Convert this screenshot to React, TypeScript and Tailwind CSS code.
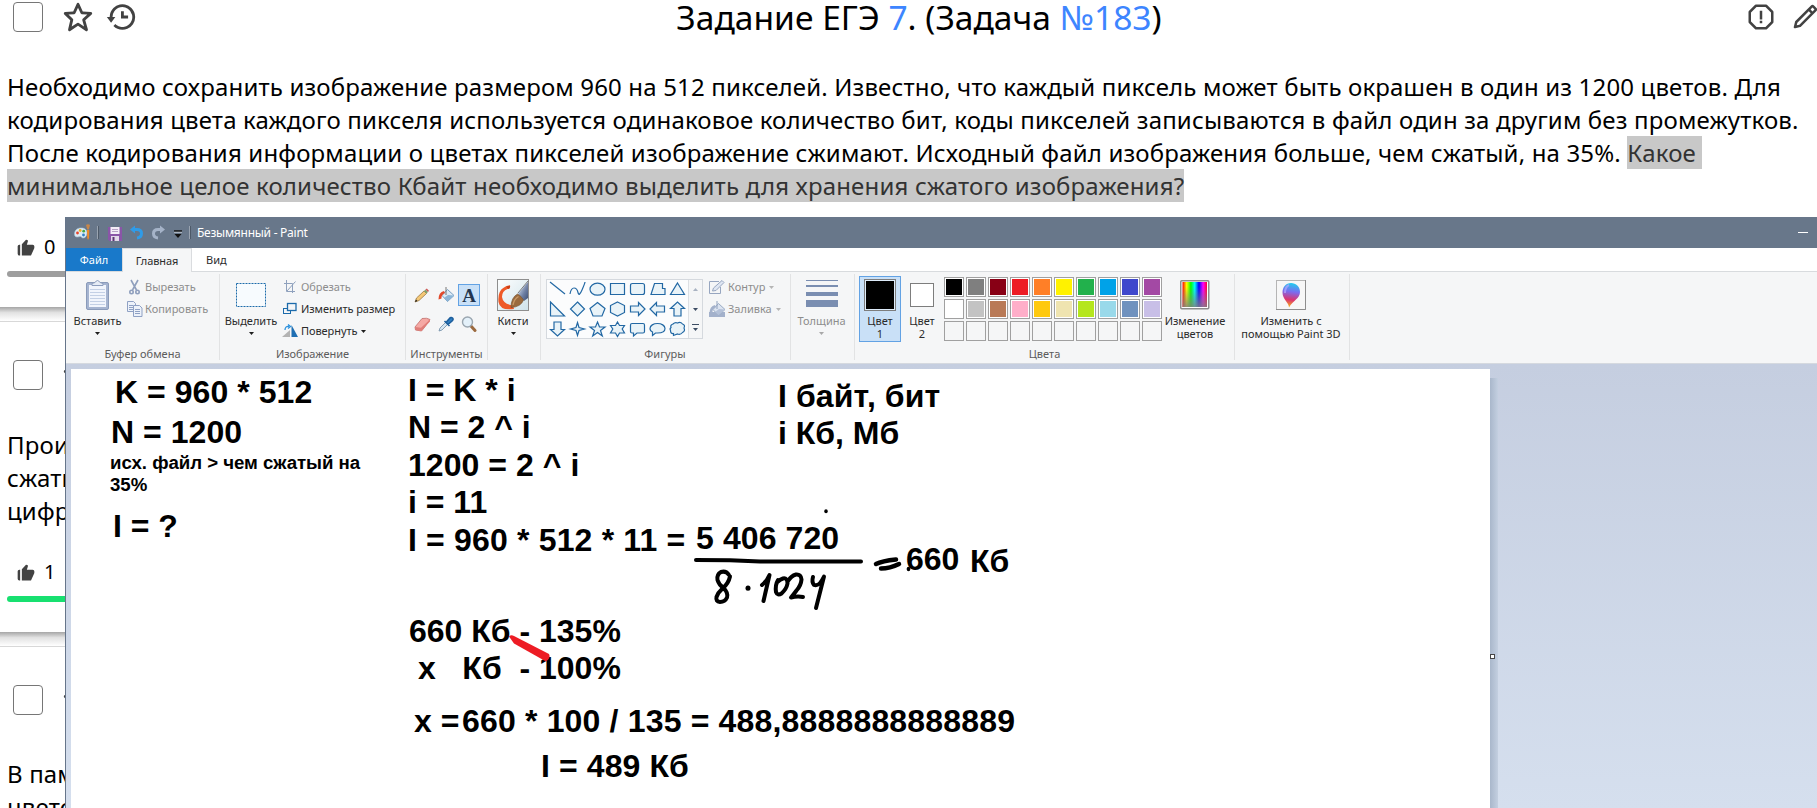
import React from "react";
import { BiStar, BiHistory, BiErrorAlt, BiPencil, BiSolidLike } from "react-icons/bi";

/* ---------- Task cards ---------- */

function CardHeader({ children }: { children?: React.ReactNode }) {
  return (
    <div className="flex h-[34px] items-start">
      <div className="ml-[13px] h-[30px] w-[30px] shrink-0 rounded-[4px] border border-[#767676] bg-white" />
      <BiStar className="-mt-[2px] ml-[18px] h-[34px] w-[34px] shrink-0 text-[#424242]" />
      <BiHistory className="-mt-[2px] ml-[9px] h-[34px] w-[34px] shrink-0 text-[#424242]" />
      {children}
    </div>
  );
}

function CardFooter({ likes, bar }: { likes: string; bar: string }) {
  return (
    <>
      <div className="mt-[32px] flex h-[26px] items-center pl-[16px]">
        <BiSolidLike className="mt-[1px] h-[20px] w-[20px] text-[#424242]" />
        <span className="ml-[8px] text-[20px] leading-[26px]">{likes}</span>
      </div>
      <div className={`mx-[7px] mt-[11px] h-[6px] rounded-full ${bar}`} />
      <div className="h-[30px]" />
    </>
  );
}

function Gap() {
  return <div className="h-[15px] border-b border-[#d8d8d8] bg-gradient-to-b from-[#a6a6a6] via-[#e2e2e2] via-40% to-white" />;
}

/* ---------- Ribbon pieces ---------- */

function Group({ label, width, children }: { label?: string; width: string; children: React.ReactNode }) {
  return (
    <div className={`flex h-[91px] shrink-0 flex-col ${width}`}>
      <div className="flex h-[75px]">{children}</div>
      <div className="text-center leading-[14px] text-[#5c5c5c]">{label}</div>
    </div>
  );
}

function Sep() {
  return <div className="mt-[2px] h-[86px] w-px shrink-0 bg-[#e2e3e4]" />;
}

function Arrow({ c = "#1e1e1e" }: { c?: string }) {
  return (
    <svg width="5" height="3" viewBox="0 0 5 3" className="shrink-0">
      <path d="M0 0h5L2.500 3z" fill={c} />
    </svg>
  );
}

function Big({ icon, label, width, gray, arrow = true }: { icon: React.ReactNode; label: React.ReactNode; width: string; gray?: boolean; arrow?: boolean }) {
  return (
    <div className={`flex shrink-0 flex-col items-center ${width} ${gray ? "text-[#8d8d8d]" : "text-[#2b2b2b]"}`}>
      <div className="flex h-[42px] items-center pt-[4px]">{icon}</div>
      <div className="text-center leading-[13px] whitespace-nowrap">{label}</div>
      {arrow && (
        <div className="mt-[5px] flex">
          <Arrow c={gray ? "#a8a8a8" : "#1e1e1e"} />
        </div>
      )}
    </div>
  );
}

function Row({ icon, label, gray, arrow }: { icon: React.ReactNode; label: string; gray?: boolean; arrow?: boolean }) {
  return (
    <div className={`flex h-[22px] items-center leading-[22px] ${gray ? "text-[#8d8d8d]" : "text-[#2b2b2b]"}`}>
      <span className="flex w-[18px] shrink-0">{icon}</span>
      <span className="whitespace-nowrap">{label}</span>
      {arrow && (
        <span className="ml-[4px] flex">
          <Arrow c={gray ? "#b5b5b5" : "#1e1e1e"} />
        </span>
      )}
    </div>
  );
}

/* ---------- Icons ---------- */

const Clipboard = () => (
  <svg width="26" height="32" viewBox="0 0 26 32">
    <rect x="1.5" y="3.5" width="22" height="27" rx="1.5" fill="#a5b4d0" stroke="#8a9bba" />
    <rect x="4" y="6" width="17" height="22" fill="#f1f5fc" />
    <path d="M5 10.500h15M5 13.500h15M5 16.500h15M5 19.500h15M5 22.500h15M5 25.500h15" stroke="#c3d0e5" />
    <path d="M7 6.500V4.500l3-1q2.500-4 5 0l3 1v2z" fill="#e6ecf5" stroke="#8c9dbd" />
  </svg>
);

const Scissors = () => (
  <svg width="16" height="16" viewBox="0 0 16 16" fill="none" stroke="#8f9fbd" strokeWidth="1.600">
    <path d="M4 1l5.500 10M11 1L5.500 11" />
    <circle cx="4.500" cy="13" r="1.700" />
    <circle cx="10.500" cy="13" r="1.700" />
  </svg>
);

const Copy = () => (
  <svg width="16" height="16" viewBox="0 0 16 16" fill="#edf2fa" stroke="#8fa1c4">
    <path d="M.5.5h6l2 2v8h-8z" />
    <path d="M2 4.500h4M2 6.500h4M2 8.500h4" />
    <path d="M6.500 4.500h6l2.500 2.500v8.500h-8.500z" />
    <path d="M8 8.500h5M8 10.500h5M8 12.500h5" />
  </svg>
);

const Crop = () => (
  <svg width="14" height="14" viewBox="0 0 14 14" fill="none" stroke="#8fa1bd">
    <path d="M3.500 0v11.500H12M1 3.500h8.500V13M4 11l8.500-9.500" />
  </svg>
);

const Resize = () => (
  <svg width="15" height="14" viewBox="0 0 15 14" fill="#f5f6f7" stroke="#1c6bab">
    <rect x=".5" y="6.500" width="7" height="5" />
    <rect x="4.500" y="1.500" width="8.500" height="7" strokeWidth="1.300" />
  </svg>
);

const Rotate = () => (
  <svg width="16" height="14" viewBox="0 0 16 14" className="-ml-[1px]">
    <path d="M0 13h8V6z" fill="#b3b3b3" />
    <path d="M9.500 1v12H16z" fill="#1f6fb3" />
    <path d="M3 6q0-4 4-3.500M6 .5l2.500 2L6 4.500" fill="none" stroke="#2a90dd" strokeWidth="1.300" />
  </svg>
);

const Pencil = () => (
  <svg width="16" height="16" viewBox="0 0 16 16">
    <path d="M1 15l1.500-4L10 4l2.500 2.500L5 13.500z" fill="#f4c877" stroke="#8e6a34" strokeWidth=".7" />
    <path d="M1 15l1-2.500 1.500 1.500z" fill="#222" />
    <path d="M10 4l1.500-1.500L14 5l-1.500 1.500z" fill="#7fa36e" />
    <path d="M11.500 2.500l1.300-1 2.200 2.200L14 5z" fill="#d05a5a" />
  </svg>
);

const Bucket = ({ gray = false }: { gray?: boolean }) => (
  <svg width="17" height="16" viewBox="0 0 17 16">
    {gray && <rect x="0" y="11" width="16" height="5" fill="#a3b1cb" />}
    <path d="M9.500 2.500L16 8.500 9.500 14.500 4 8.500z" fill={gray ? "#dbe3f0" : "#dcebf7"} stroke={gray ? "#8fa1bd" : "#6b94ba"} strokeWidth=".9" />
    <path d="M10 8L16 8.500 9.500 14.500 6 11z" fill={gray ? "#b4c1d8" : "#8db6d8"} />
    <path d="M8 0v8" stroke={gray ? "#8fa1bd" : "#777"} />
    <path d="M6 4Q.5 5 .5 12.500l3-1Q3 8 7 6z" fill={gray ? "#a3b1cb" : "#e2492b"} />
  </svg>
);

const Eraser = () => (
  <svg width="17" height="15" viewBox="0 0 17 15">
    <path d="M1 10L8 1.500q5-1 8 1L10 11 7.500 14 1.500 13z" fill="#f5a9a5" stroke="#c0706c" strokeWidth=".8" />
    <path d="M1 10l6 .8L16 2.500v2L10 11l-2.500 3-6-1z" fill="#e07e79" />
  </svg>
);

const Picker = () => (
  <svg width="16" height="16" viewBox="0 0 16 16">
    <path d="M1 15l1-3 6-6 2 2-6 6z" fill="#d6e6f2" stroke="#6d8ba6" strokeWidth=".8" />
    <path d="M6.500 5l5 5M8 6.500l3-3.500q2-2.500 3.500-1t-1 3.500l-3.500 3z" stroke="#1d5e9c" strokeWidth="1.600" fill="#2f7ec2" />
  </svg>
);

const Magnifier = () => (
  <svg width="16" height="16" viewBox="0 0 16 16">
    <path d="M9.500 9.500L14 14.500" stroke="#9b6a40" strokeWidth="3" strokeLinecap="round" />
    <circle cx="6.500" cy="6" r="5" fill="#e4f1fa" stroke="#9aa6b0" strokeWidth="1.400" />
  </svg>
);

const Brush = () => (
  <svg width="32" height="32" viewBox="0 0 32 32">
    <defs>
      <linearGradient id="brushBg" x1="0" y1="0" x2="1" y2="1">
        <stop offset="0" stopColor="#fdfefe" />
        <stop offset="1" stopColor="#cfe3ea" />
      </linearGradient>
      <linearGradient id="ferrule" x1="0" y1="0" x2="1" y2="1">
        <stop offset=".1" stopColor="#d5deec" />
        <stop offset=".6" stopColor="#6d7fa3" />
        <stop offset="1" stopColor="#3f4f73" />
      </linearGradient>
    </defs>
    <rect x=".5" y=".5" width="31" height="31" fill="url(#brushBg)" stroke="#8e8e8e" />
    <path d="M13 6.500q.5 4-2.500 3.500Q5 12 5 18q1 7 11 8.500l1 3.500Q3 32 1.500 23 .5 12 7 8.500 10 6 13 6.500z" fill="#ee5a28" />
    <path d="M13 6.500q.5 4-2.500 3l-1-2z" fill="#c93f16" />
    <path d="M21 15L31 3v16l-4 3z" fill="url(#ferrule)" />
    <path d="M21 14L31 2" stroke="#5a5a5a" strokeWidth=".8" />
    <path d="M14 28.500q0-10 6.500-13.500 3.500 1.500 6 6-2.500 7-12.500 7.500z" fill="#9a6b3e" stroke="#6f4a27" strokeWidth=".6" />
    <path d="M16 26q1-6 5.500-8.500" stroke="#c89a66" strokeWidth="1.300" fill="none" />
  </svg>
);

const SHAPES = [
  "M3 3l15 12",
  "M3 15Q4 9 7 9t4 4.500 4-2.500 3-8",
  "M10.500 4.200a7.500 6 0 100 12 7.500 6 0 100-12z",
  "M3.500 4.500h14v11h-14z",
  "M5.500 4.500h10q2 0 2 2v7q0 2-2 2h-10q-2 0-2-2v-7q0-2 2-2z",
  "M7.500 4.500h8v5h2.500v6H4z",
  "M10.500 4l7 11.500h-14z",
  "M3.500 3v14h14z",
  "M10.500 3l7 7-7 7-7-7z",
  "M10.500 3.500l7.500 6-3 7.500H6l-3-7.500z",
  "M10.500 3l7 3.500v7l-7 3.500-7-3.500v-7z",
  "M3.500 7h8V3.500l6.500 6.500-6.500 6.500V13h-8z",
  "M17.500 7h-8V3.500L3 10l6.500 6.500V13h8z",
  "M7 17v-7.500H3.500L10.500 3l7 6.500H14V17z",
  "M7 3v7.500H3.500l7 6.500 7-6.500H14V3z",
  "M10.500 3.500l1.500 5 5.500 1.500-5.500 1.500-1.500 5-1.500-5-5.500-1.500 5.500-1.500z",
  "M10.500 3l2 5h5.500l-4.500 3.500 1.800 5.500-4.800-3.500-4.800 3.500 1.800-5.500L3 8h5.500z",
  "M10.500 3l2 3.500h5l-2.300 3.500 2.300 4h-5l-2 3.500-2-3.500h-5l2.300-4-2.300-3.500h5z",
  "M5 4.500h11q1.500 0 1.500 1.500v6.500q0 1.500-1.500 1.500h-6l-3.500 3v-3H5q-1.500 0-1.500-1.500V6q0-1.500 1.500-1.500z",
  "M10.500 4.500c4 0 7.500 2 7.500 5s-3 4.500-7.500 4.500q-1 0-2 0l-3 2.500V13Q3 12 3 9.500c0-3 3.500-5 7.500-5z",
  "M6 5q2-2 4.500-1 3-1.500 5 1 3 1 1.500 4 1.500 3-1.500 4.500-2 2.500-5 1.500l-4 1.500v-2q-3 .5-3-3-1-2 .5-3Q3 6 6 5z",
];

const Outline = () => (
  <svg width="16" height="14" viewBox="0 0 16 14" fill="none" stroke="#97a6c0">
    <path d="M10 1.500H.5v12h11V7" />
    <path d="M3.500 11l1-3L13 .5l2 2-8 8z" fill="#dfe6f2" />
  </svg>
);

const Rainbow = () => (
  <svg width="30" height="30" viewBox="0 0 30 30">
    <defs>
      <linearGradient id="hue">
        <stop offset="0" stopColor="#f00" />
        <stop offset=".17" stopColor="#ff0" />
        <stop offset=".34" stopColor="#0f0" />
        <stop offset=".5" stopColor="#0ff" />
        <stop offset=".67" stopColor="#00f" />
        <stop offset=".84" stopColor="#f0f" />
        <stop offset="1" stopColor="#f03" />
      </linearGradient>
      <linearGradient id="dull" x1="0" y1="0" x2="0" y2="1">
        <stop offset=".2" stopColor="#808080" stopOpacity="0" />
        <stop offset="1" stopColor="#808080" stopOpacity=".85" />
      </linearGradient>
    </defs>
    <rect x=".75" y=".75" width="28" height="28" rx="1" fill="#fff" stroke="#8c8c8c" strokeWidth="1.500" />
    <rect x="2.500" y="2" width="24.500" height="25" fill="url(#hue)" />
    <rect x="2.500" y="2" width="24.500" height="25" fill="url(#dull)" />
  </svg>
);

const Paint3D = () => (
  <svg width="30" height="30" viewBox="0 0 30 30">
    <defs>
      <linearGradient id="drop" x1=".5" y1="0" x2=".4" y2="1">
        <stop offset="0" stopColor="#20cdee" />
        <stop offset=".35" stopColor="#7a6cf0" />
        <stop offset=".68" stopColor="#dc3470" />
        <stop offset="1" stopColor="#f9b916" />
      </linearGradient>
    </defs>
    <rect x=".5" y=".5" width="29" height="29" fill="#f7f7f7" stroke="#b5b5b5" />
    <path d="M0 29.500h29.500V0" fill="none" stroke="#8e8e8e" />
    <path d="M15 3c5 0 9 3.500 9 9 0 6.500-7 8.500-11 15.500 0-5-6.500-8-6.500-15C6.500 7 10 3 15 3z" fill="url(#drop)" />
    <path d="M9 13q0-6 4-8" fill="none" stroke="#b8a6ff" strokeWidth="2" opacity=".7" />
  </svg>
);

const Palette = () => (
  <svg width="17" height="17" viewBox="0 0 17 17">
    <path d="M7 4c4 0 6 2 6 5s-2 5-4 5-1-2-3-1.500S.5 14 .5 10 3.500 4 7 4z" fill="#dcebf5" stroke="#a7c4d8" strokeWidth=".6" />
    <circle cx="3.500" cy="9" r="1.400" fill="#e8452c" />
    <circle cx="6.200" cy="6.500" r="1.400" fill="#f0b323" />
    <circle cx="9.700" cy="7.200" r="1.400" fill="#46a746" />
    <circle cx="9.500" cy="11" r="1.400" fill="#2f80c8" />
    <path d="M12 1q2-1.500 4 0l-1.200 4.500h-1.500z" fill="#c78649" />
    <path d="M13 6h2.300l-.3 8-1 2-.8-2z" fill="#ee8a2a" />
  </svg>
);

const Floppy = () => (
  <svg width="14" height="14" viewBox="0 0 14 14">
    <path d="M0 0h14v14H1.500L0 12.500z" fill="#8a55a8" />
    <rect x="2.500" y="0" width="9" height="7" fill="#f3eef7" />
    <path d="M4 2.500h6M4 4.500h6" stroke="#b7a1c7" />
    <rect x="3" y="9" width="8" height="5" fill="#e3d9ea" />
    <rect x="4.500" y="10" width="2" height="4" fill="#5b3573" />
  </svg>
);

const Undo = ({ c }: { c: string }) => (
  <svg width="14" height="15" viewBox="0 0 14 15" fill="none" stroke={c} strokeWidth="3">
    <path d="M2.500 4.500H7q4.500 0 4.500 4T7 13" />
    <path d="M0 4.500L5 .5v8z" fill={c} stroke="none" />
  </svg>
);

/* ---------- Palette colours ---------- */

const COLORS = [
  "bg-[#000000]", "bg-[#7f7f7f]", "bg-[#880015]", "bg-[#ed1c24]", "bg-[#ff7f27]",
  "bg-[#fff200]", "bg-[#22b14c]", "bg-[#00a2e8]", "bg-[#3f48cc]", "bg-[#a349a4]",
  "bg-[#ffffff]", "bg-[#c3c3c3]", "bg-[#b97a57]", "bg-[#ffaec9]", "bg-[#ffc90e]",
  "bg-[#efe4b0]", "bg-[#b5e61d]", "bg-[#99d9ea]", "bg-[#7092be]", "bg-[#c8bfe7]",
];

/* ---------- Notes typed on the canvas ---------- */

function Note({ at, children }: { at: string; children: React.ReactNode }) {
  return (
    <div className={`absolute font-['Liberation_Sans',Arial,sans-serif] text-[32px] leading-[37px] font-bold whitespace-pre text-black ${at}`}>
      {children}
    </div>
  );
}

function Canvas() {
  return (
    <div className="relative h-[439px] w-[1419px] shrink-0 bg-white">
      <Note at="left-[44px] top-[5px] tracking-[0.05px]">K = 960 * 512</Note>
      <Note at="left-[40px] top-[45px] tracking-[0.05px]">N = 1200</Note>
      <div className="absolute top-[83px] left-[39px] font-['Liberation_Sans',Arial,sans-serif] text-[18.67px] leading-[22px] font-bold tracking-[-0.04px] whitespace-pre">
        {"исх. файл > чем сжатый на\n35%"}
      </div>
      <Note at="left-[42px] top-[139px]">I = ?</Note>
      <Note at="left-[337px] top-[3px]">I = K * i</Note>
      <Note at="left-[337px] top-[40px]">N = 2 ^ i</Note>
      <Note at="left-[337px] top-[78px] tracking-[0.05px]">1200 = 2 ^ i</Note>
      <Note at="left-[337px] top-[115px]">i = 11</Note>
      <Note at="left-[337px] top-[153px] tracking-[0.17px]">I = 960 * 512 * 11 =</Note>
      <Note at="left-[625px] top-[151px] tracking-[0.1px]">5 406 720</Note>
      <Note at="left-[835px] top-[172px]">660</Note>
      <Note at="left-[899px] top-[174px]">Кб</Note>
      <Note at="left-[707px] top-[9px] tracking-[0.1px]">I байт, бит</Note>
      <Note at="left-[707px] top-[46px]">i Кб, Мб</Note>
      <Note at="left-[338px] top-[244px]">660 Кб - 135%</Note>
      <Note at="left-[338px] top-[281px]">{" x   Кб  - 100%"}</Note>
      <Note at="left-[343px] top-[334px]">x =</Note>
      <Note at="left-[391px] top-[334px] tracking-[0.17px]">660 * 100 / 135 = 488,8888888888889</Note>
      <Note at="left-[470px] top-[379px] tracking-[0.1px]">I = 489 Кб</Note>
      <svg className="absolute top-0 left-0" width="1419" height="439" viewBox="71 369 1419 439" fill="none" strokeLinecap="round" strokeLinejoin="round">
        <path d="M509 636.500q2-2 5-.5l35 18q2 4-3 7.500l-32-18z" fill="#ed1c24" />
        <g stroke="#000" strokeWidth="4">
          <path d="M696 560l34 .2 30 1.300H861" />
          <path d="M729 575q-3-4.500-8-3-4.500 2.500-3.500 8 1.500 5 6 8 5 5 3.500 9.500-2 4.500-7 4.500-4.500-.5-3.500-5 1.500-4.500 6-8.500 6-5 7.500-12" />
          <path d="M748 588v.3" strokeWidth="5" />
          <path d="M762 585q5-4 7.500-10l-6 26" />
          <path d="M778 580q-3 5-2 12 1.500 4 5.500 1.500 5-4.500 6-10 0-6-4.500-5-3 1-5 3" />
          <path d="M788 581q3-5 8-6.500 5-.5 5.500 5-.5 6-5 11-3 4-5.500 7 6-1.500 12-.5" />
          <path d="M813 577q-1.500 5 1 8 5 2 10-8.500l-8 31.500" />
          <path d="M876 564q6-3 20-4.500" strokeWidth="4.500" />
          <path d="M881 568.500q9 0 18-4.500" strokeWidth="4.500" />
          <path d="M826 511v.4" strokeWidth="3.500" />
          <path d="M908.500 568.500v1" strokeWidth="3.500" />
        </g>
      </svg>
    </div>
  );
}

/* ---------- Paint window ---------- */

function PaintWindow() {
  return (
    <div className="absolute top-[217px] left-[65px] h-[591px] w-[1752px] overflow-hidden border-l border-[#66758a] bg-white font-['Noto_Sans','Open_Sans',sans-serif] text-[11px]">
      <div className="flex h-[31px] items-center bg-[#68778a] pl-[8px] text-white">
        <Palette />
        <div className="ml-[6px] h-[13px] w-[2px] border-l border-[#99a3b0] bg-[#4d5968]" />
        <div className="ml-[9px] flex pt-[2px]"><Floppy /></div>
        <div className="ml-[8px] flex"><Undo c="#2f9be8" /></div>
        <div className="ml-[7px] flex -scale-x-100"><Undo c="#a5b3c8" /></div>
        <svg width="8" height="8" viewBox="0 0 8 8" className="mt-[2px] ml-[9px]">
          <path d="M0 1h8" stroke="#111" strokeWidth="1.500" />
          <path d="M0 2.300h8" stroke="#cfd6de" strokeWidth=".8" />
          <path d="M.5 4h7L4 8z" fill="#111" />
        </svg>
        <div className="ml-[7px] h-[13px] w-[2px] border-l border-[#99a3b0] bg-[#4d5968]" />
        <span className="ml-[6px] text-[12px] leading-[14px] tracking-[-0.26px] whitespace-nowrap">Безымянный - Paint</span>
        <div className="mr-[9px] ml-auto h-px w-[10px] bg-white" />
      </div>

      <div className="flex h-[24px] border-b border-[#d8dbde] text-[#2b2b2b]">
        <div className="flex w-[56px] items-center justify-center bg-[#1979ca] text-white">Файл</div>
        <div className="-mb-px flex w-[70px] items-center justify-center border border-b-0 border-[#dadcdf] bg-[#f5f6f7] pb-px tracking-[-0.1px]">Главная</div>
        <div className="ml-[14px] flex items-center">Вид</div>
      </div>

      <div className="flex h-[92px] border-b border-[#d5d9df] bg-[#f5f6f7]">
        <Group label="Буфер обмена" width="w-[153px]">
          <Big width="ml-[5px] w-[53px]" icon={<Clipboard />} label="Вставить" />
          <div className="mt-[4px] ml-[3px]">
            <Row gray icon={<Scissors />} label="Вырезать" />
            <Row gray icon={<Copy />} label="Копировать" />
          </div>
        </Group>
        <Sep />
        <Group label="Изображение" width="w-[185px]">
          <Big
            width="ml-[4px] w-[54px]"
            icon={
              <svg width="30" height="24">
                <rect x=".5" y=".5" width="29" height="23" fill="#f7fbfe" stroke="#1c6bab" strokeDasharray="2 1" />
              </svg>
            }
            label="Выделить"
          />
          <div className="mt-[4px] ml-[5px] tracking-[-0.06px]">
            <Row gray icon={<Crop />} label="Обрезать" />
            <Row icon={<Resize />} label="Изменить размер" />
            <Row arrow icon={<Rotate />} label="Повернуть" />
          </div>
        </Group>
        <Sep />
        <Group label="Инструменты" width="w-[81px]">
          <div className="mt-[12px] ml-[4px] grid h-[51px] grid-cols-[24px_22px_22px] grid-rows-[22px_22px] gap-x-[1px] gap-y-[7px]">
            <div className="flex items-center justify-center"><Pencil /></div>
            <div className="flex items-center justify-center"><Bucket /></div>
            <div className="flex items-center justify-center border border-[#62a2e4] bg-[#c9e0f7] font-['Liberation_Serif',serif] text-[19px] leading-none font-bold text-[#22354f]">A</div>
            <div className="flex items-center justify-center"><Eraser /></div>
            <div className="flex items-center justify-center"><Picker /></div>
            <div className="flex items-center justify-center"><Magnifier /></div>
          </div>
        </Group>
        <Sep />
        <Group width="w-[52px]">
          <Big width="w-[50px]" icon={<Brush />} label="Кисти" />
        </Group>
        <Sep />
        <Group label="Фигуры" width="w-[248px]">
          <div className="mt-[7px] ml-[5px] flex h-[60px] w-[157px] shrink-0 border border-[#d5d9de] bg-[#fbfcfd]">
            <div className="-mt-px grid w-[141px] grid-cols-[repeat(7,20px)] grid-rows-[repeat(3,20px)]">
              {SHAPES.map((d, i) => (
                <svg key={i} width="21" height="20" viewBox="0 0 21 20" fill="#e9f3f8" stroke="#2268a4" strokeWidth="1.200">
                  <path d={d} fill={i < 2 ? "none" : undefined} />
                </svg>
              ))}
            </div>
            <div className="flex flex-1 flex-col items-center border-l border-[#dcdfe3] bg-[#f5f6f7] pt-[8px]">
              <div className="flex rotate-180"><Arrow c="#a9b3c2" /></div>
              <div className="mt-[17px] flex"><Arrow c="#3c4c63" /></div>
              <div className="mt-[13px] h-px w-[7px] bg-[#3c4c63]" />
              <div className="mt-[3px] flex"><Arrow c="#3c4c63" /></div>
            </div>
          </div>
          <div className="mt-[4px] ml-[6px] [&_span:first-child]:mr-px">
            <Row gray arrow icon={<Outline />} label="Контур" />
            <Row gray arrow icon={<Bucket gray />} label="Заливка" />
          </div>
        </Group>
        <div className="w-px shrink-0" />
        <Sep />
        <Group width="w-[63px]">
          <Big
            gray
            width="w-[61px]"
            icon={
              <div className="flex h-[30px] w-[32px] flex-col">
                <div className="h-px bg-[#7a8eb1]" />
                <div className="mt-[4px] h-[2px] bg-[#7a8eb1]" />
                <div className="mt-[5px] h-[4px] bg-[#7a8eb1]" />
                <div className="mt-[4px] h-[7px] bg-[#7a8eb1]" />
              </div>
            }
            label="Толщина"
          />
        </Group>
        <Sep />
        <Group label="Цвета" width="w-[379px]">
          <div className="mt-[4px] ml-[4px] flex h-[66px] w-[42px] shrink-0 flex-col items-center border border-[#62a2e4] bg-[#c9e0f7] pt-[2px] text-[#2b2b2b]">
            <div className="h-[32px] w-[32px] shrink-0 border border-[#7d7d7d] bg-white/40 p-px">
              <div className="h-full w-full bg-black" />
            </div>
            <div className="mt-[3px] text-center leading-[13px]">Цвет<br />1</div>
          </div>
          <div className="flex w-[42px] shrink-0 flex-col items-center pt-[11px] text-[#2b2b2b]">
            <div className="h-[24px] w-[24px] shrink-0 border border-[#7d7d7d] bg-white" />
            <div className="mt-[7px] text-center leading-[13px]">Цвет<br />2</div>
          </div>
          <div className="mt-[5px] ml-[1px] grid shrink-0 grid-cols-[repeat(10,20px)] grid-rows-[repeat(3,20px)] gap-[2px]">
            {COLORS.map((c) => (
              <div key={c} className="border border-[#a0a0a0] bg-white p-px">
                <div className={`h-full w-full ${c}`} />
              </div>
            ))}
            {Array.from({ length: 10 }, (_, i) => (
              <div key={i} className="border border-[#a0a0a0] bg-[#f5f6f7]" />
            ))}
          </div>
          <Big arrow={false} width="ml-[2px] w-[62px]" icon={<Rainbow />} label={<>Изменение<br />цветов</>} />
        </Group>
        <Sep />
        <Group width="w-[114px]">
          <Big arrow={false} width="w-[112px]" icon={<Paint3D />} label={<>Изменить с<br />помощью Paint 3D</>} />
        </Group>
        <Sep />
      </div>

      <div className="flex h-[444px] bg-gradient-to-b from-[#c5cee0] to-[#d5dfee] pt-[5px] pl-[5px]">
        <Canvas />
        <div className="relative mt-[9px] h-[430px] w-[8px] bg-gradient-to-r from-[#a9b7cb] to-[#c3cfe0]">
          <div className="absolute top-[276px] left-0 h-[5px] w-[5px] border border-[#444] bg-white" />
        </div>
      </div>
    </div>
  );
}

/* ---------- Page ---------- */

export default function App() {
  return (
    <div className="relative h-[808px] w-[1817px] overflow-hidden bg-white font-['Noto_Sans','Open_Sans',sans-serif] text-[24px] leading-[33px] text-black">
      <section className="h-[307px] pt-[2px]">
        <div className="grid h-[34px] w-[1838px] grid-cols-[1fr_auto_1fr]">
          <CardHeader />
          <h1 className="mt-[-3px] text-[33.6px] leading-[36px] whitespace-nowrap">
            Задание ЕГЭ <span className="text-[#3d85ff]">7</span>. (Задача <span className="text-[#3d85ff]">№183</span>)
          </h1>
          <div className="mr-[18px] flex justify-end text-[#424242]">
            <BiErrorAlt className="h-[30px] w-[30px] shrink-0" />
            <BiPencil className="ml-[14px] h-[30px] w-[30px] shrink-0" />
          </div>
        </div>
        <p className="mt-[34px] ml-[7px] h-[132px] tracking-[0.16px] whitespace-nowrap">
          Необходимо сохранить изображение размером 960 на 512 пикселей. Известно, что каждый пиксель может быть окрашен в один из 1200 цветов. Для<br />
          кодирования цвета каждого пикселя используется одинаковое количество бит, коды пикселей записываются в файл один за другим без промежутков.<br />
          После кодирования информации о цветах пикселей изображение сжимают. Исходный файл изображения больше, чем сжатый, на 35%.{" "}
          <span className="inline-block h-[33px] bg-[#c8c8c8] align-top whitespace-pre text-[#333]">{"Какое "}</span><br />
          <span className="inline-block h-[33px] bg-[#c8c8c8] align-top text-[#333]">минимальное целое количество Кбайт необходимо выделить для хранения сжатого изображения?</span>
        </p>
        <CardFooter likes="0" bar="bg-[#9e9e9e]" />
      </section>
      <Gap />
      <section className="h-[310px] pt-[38px]">
        <CardHeader />
        <p className="mt-[34px] ml-[7px] h-[99px] tracking-[0.16px] whitespace-nowrap">
          Прои<br />сжать<br />цифр
        </p>
        <CardFooter likes="1" bar="bg-[#18e070]" />
      </section>
      <Gap />
      <section className="h-[161px] pt-[38px]">
        <CardHeader />
        <p className="mt-[38px] ml-[7px] tracking-[0.16px] whitespace-nowrap">
          В пам<br />цвето
        </p>
      </section>
      <PaintWindow />
    </div>
  );
}
